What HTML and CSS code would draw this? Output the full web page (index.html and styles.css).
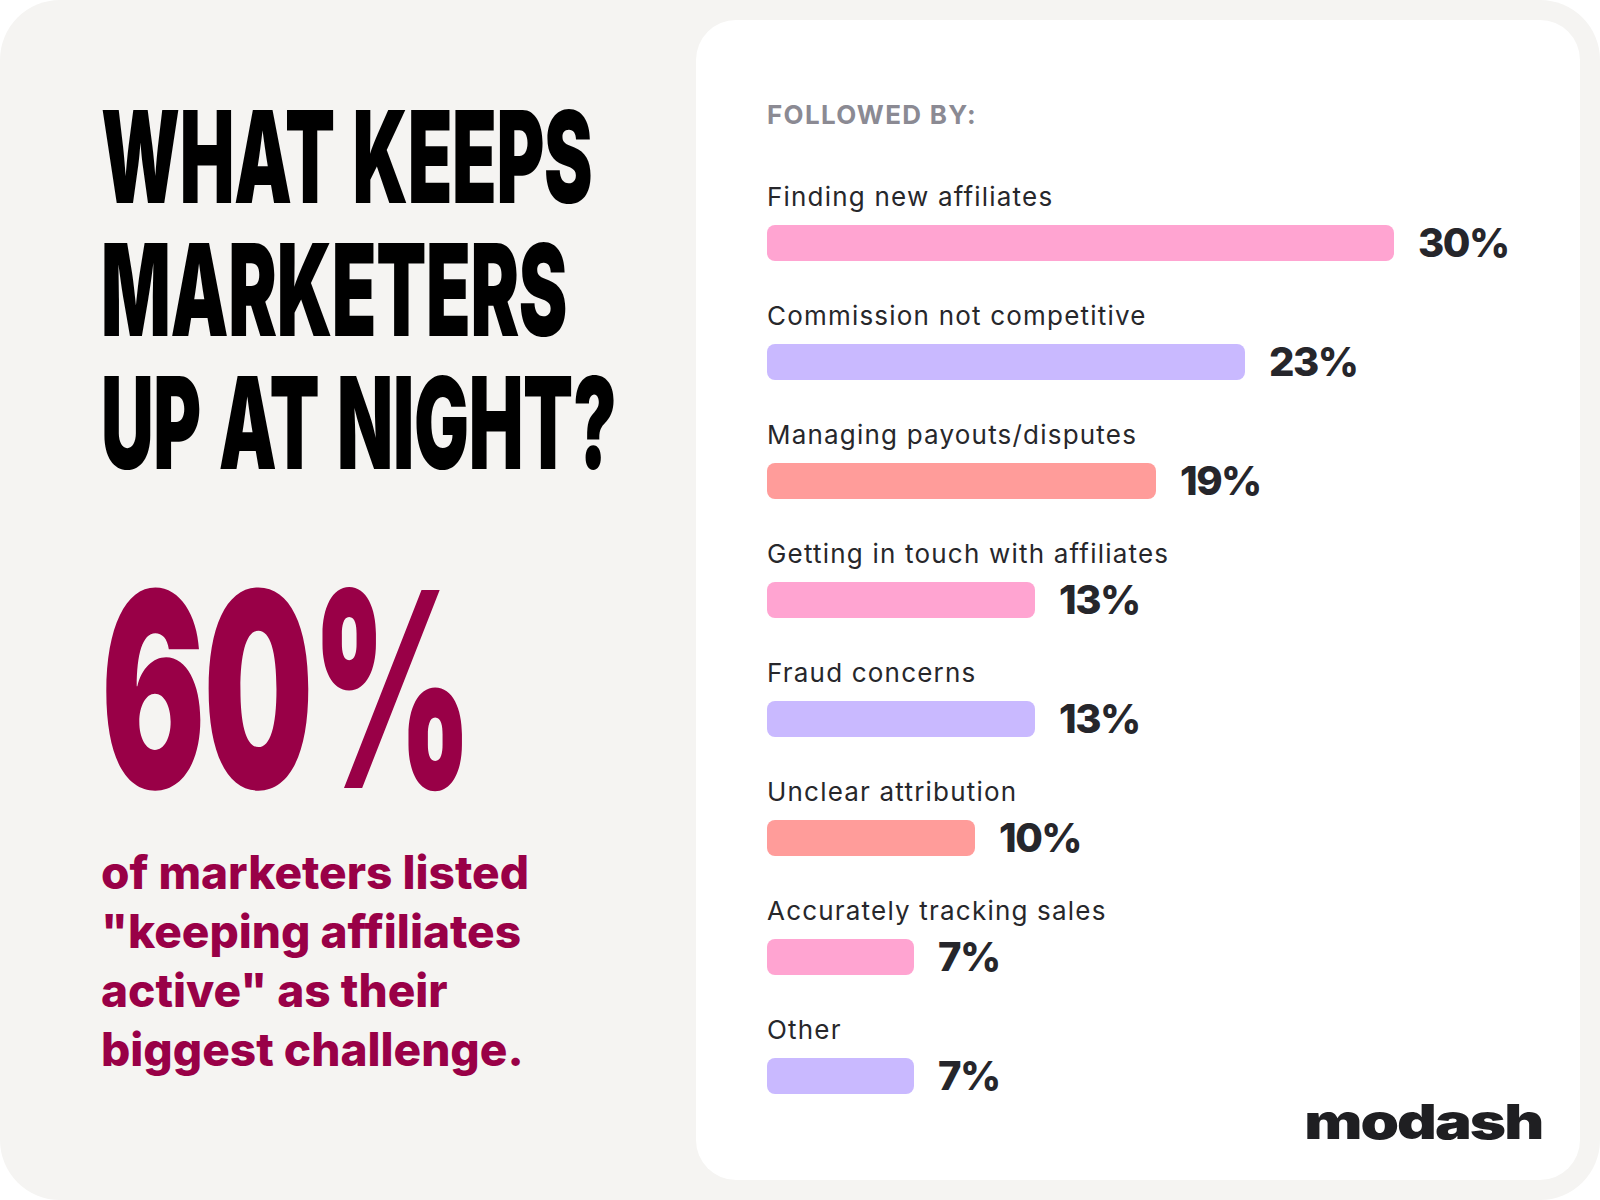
FILE: index.html
```html
<!DOCTYPE html>
<html lang="en">
<head>
<meta charset="utf-8">
<title>What keeps marketers up at night?</title>
<link rel="stylesheet" href="styles.css">
</head>
<body>
<div class="page">
  <section class="intro">
    <h1 class="headline">WHAT KEEPS<br>MARKETERS<br>UP AT NIGHT?</h1>
    <div class="big-stat">60%</div>
    <p class="stat-note">of marketers listed<br>"keeping affiliates<br>active" as their<br>biggest challenge.</p>
  </section>
  <section class="card">
    <h2 class="card-title">FOLLOWED BY:</h2>
    <ul class="rows">
      <li class="row">
        <span class="label">Finding new affiliates</span>
        <div class="bar-line"><span class="bar pink" style="width:627px"></span><span class="pct">30%</span></div>
      </li>
      <li class="row">
        <span class="label">Commission not competitive</span>
        <div class="bar-line"><span class="bar lilac" style="width:478px"></span><span class="pct">23%</span></div>
      </li>
      <li class="row">
        <span class="label">Managing payouts/disputes</span>
        <div class="bar-line"><span class="bar coral" style="width:389px"></span><span class="pct">19%</span></div>
      </li>
      <li class="row">
        <span class="label">Getting in touch with affiliates</span>
        <div class="bar-line"><span class="bar pink" style="width:268px"></span><span class="pct">13%</span></div>
      </li>
      <li class="row">
        <span class="label">Fraud concerns</span>
        <div class="bar-line"><span class="bar lilac" style="width:268px"></span><span class="pct">13%</span></div>
      </li>
      <li class="row">
        <span class="label">Unclear attribution</span>
        <div class="bar-line"><span class="bar coral" style="width:208px"></span><span class="pct">10%</span></div>
      </li>
      <li class="row">
        <span class="label">Accurately tracking sales</span>
        <div class="bar-line"><span class="bar pink" style="width:147px"></span><span class="pct">7%</span></div>
      </li>
      <li class="row">
        <span class="label">Other</span>
        <div class="bar-line"><span class="bar lilac" style="width:147px"></span><span class="pct">7%</span></div>
      </li>
    </ul>
    <div class="logo">modash</div>
  </section>
</div>
</body>
</html>
```

FILE: styles.css
```css
* { box-sizing: border-box; }
html, body { margin: 0; padding: 0; background: #ffffff; }
body { font-family: "Inter", "Noto Sans", sans-serif; }

.page {
  width: 1600px;
  height: 1200px;
  background: #f5f4f2;
  border-radius: 60px;
  display: flex;
  padding: 20px 20px 20px 0;
  overflow: hidden;
}

.intro {
  width: 696px;
  flex: none;
  padding: 70px 0 0 101px;
}

.headline {
  margin: 0;
  font-family: "Inter", sans-serif;
  font-weight: 900;
  font-size: 128px;
  line-height: 133px;
  letter-spacing: -0.5px;
  word-spacing: 6px;
  color: #000;
  white-space: nowrap;
  transform: scaleX(0.57);
  transform-origin: left top;
}

.big-stat {
  margin-top: 64px;
  font-family: "Inter", sans-serif;
  font-weight: 900;
  font-size: 272px;
  line-height: 272px;
  letter-spacing: -4px;
  color: #990047;
  white-space: nowrap;
  transform: scaleX(0.57);
  transform-origin: left top;
}

.stat-note {
  margin: 18px 0 0;
  font-weight: 800;
  font-size: 46px;
  line-height: 59px;
  letter-spacing: 0;
  color: #990047;
  white-space: nowrap;
}

.card {
  flex: 1;
  background: #ffffff;
  border-radius: 40px;
  padding: 79px 38px 34px 71px;
  display: flex;
  flex-direction: column;
}

.card-title {
  margin: 0;
  font-size: 26px;
  line-height: 32px;
  font-weight: 700;
  color: #8b8a93;
  letter-spacing: 1.3px;
}

.rows {
  list-style: none;
  margin: 50px 0 0;
  padding: 0;
  display: flex;
  flex-direction: column;
  gap: 39px;
}

.row {
  display: flex;
  flex-direction: column;
  gap: 12px;
}

.label {
  font-size: 26px;
  line-height: 32px;
  font-weight: 400;
  color: #27272b;
  letter-spacing: 1.2px;
  white-space: nowrap;
}

.bar-line {
  display: flex;
  align-items: center;
  gap: 24px;
  height: 36px;
}

.bar {
  display: block;
  height: 36px;
  border-radius: 8px;
  flex: none;
}
.pink { background: #ffa4d1; }
.lilac { background: #c9b9ff; }
.coral { background: #ff9c9a; }

.pct {
  font-size: 40px;
  line-height: 36px;
  font-weight: 800;
  color: #26262b;
  letter-spacing: -1.5px;
}

.logo {
  margin-top: auto;
  align-self: flex-end;
  font-weight: 900;
  font-size: 48px;
  line-height: 48px;
  letter-spacing: -1.5px;
  color: #1f1f22;
  transform: scaleX(1.285);
  transform-origin: right center;
}
```
